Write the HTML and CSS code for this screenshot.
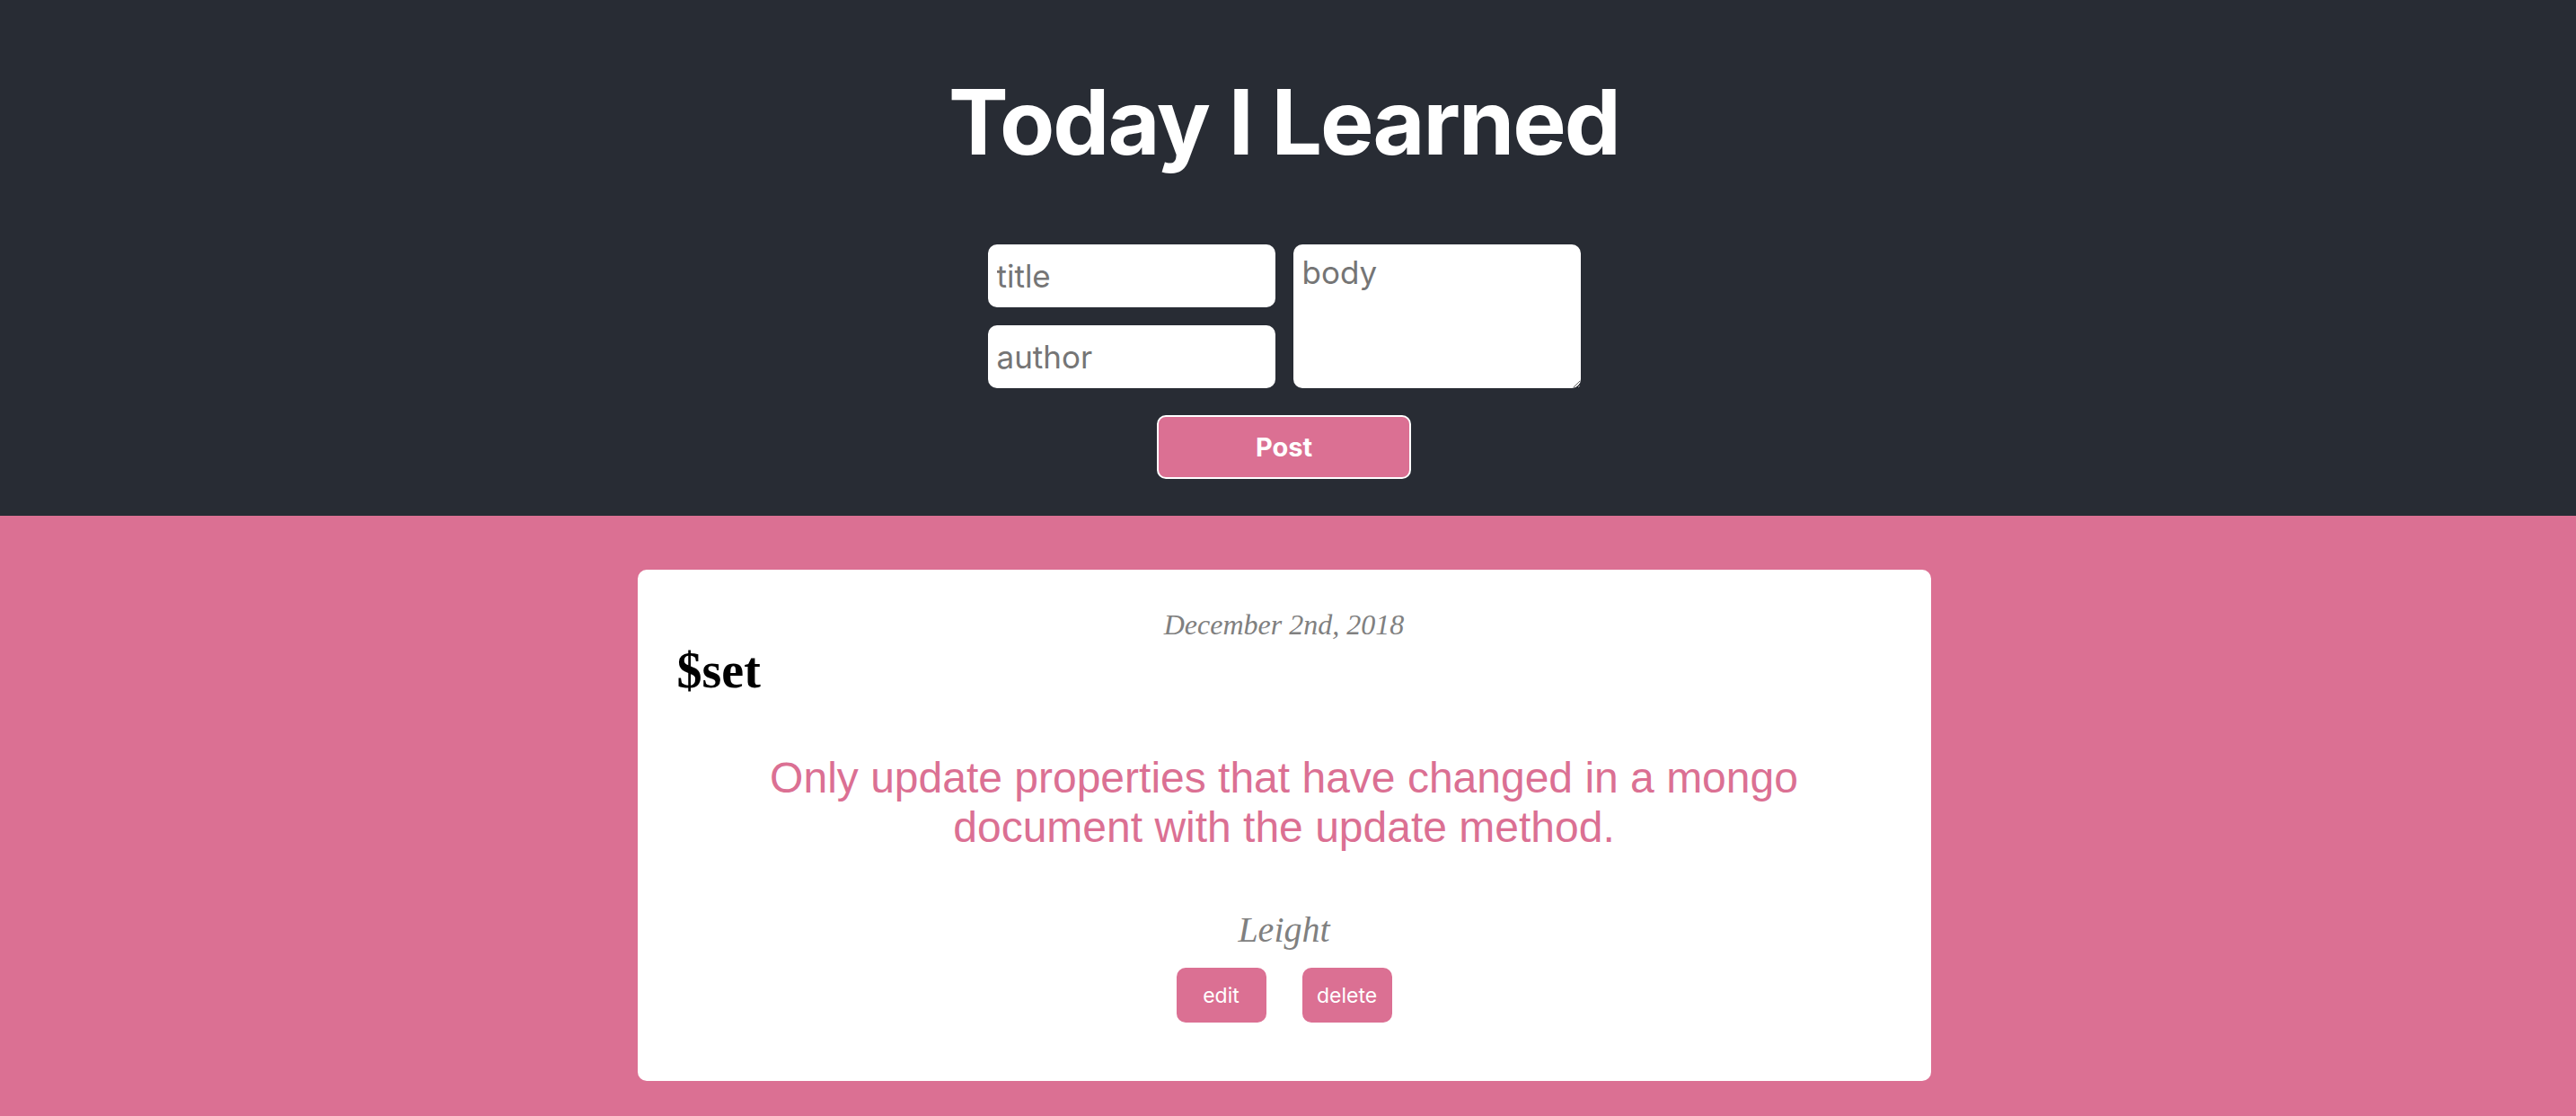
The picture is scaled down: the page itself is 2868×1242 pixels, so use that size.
FILE: index.html
```html
<!DOCTYPE html>
<html lang="en">
<head>
<meta charset="utf-8">
<title>Today I Learned</title>
<link rel="stylesheet" href="styles.css">
</head>
<body>
<header class="app-header">
  <h1 class="app-title">Today I Learned</h1>
  <form class="post-form">
    <div class="fields">
      <input class="field field-title" type="text" placeholder="title">
      <textarea class="field field-body" placeholder="body"></textarea>
      <input class="field field-author" type="text" placeholder="author">
    </div>
    <button class="post-btn" type="button">Post</button>
  </form>
</header>
<main class="posts">
  <article class="card">
    <p class="card-date">December 2nd, 2018</p>
    <h2 class="card-title">$set</h2>
    <p class="card-body">Only update properties that have changed in a mongo document with the update method.</p>
    <p class="card-author">Leight</p>
    <div class="card-actions">
      <button class="action-btn" type="button">edit</button>
      <button class="action-btn" type="button">delete</button>
    </div>
  </article>
</main>
</body>
</html>
```

FILE: styles.css
```css
html, body {
  margin: 0;
  padding: 0;
}

body {
  background: #db7093;
  min-height: 100vh;
}

.app-header {
  background: #282c34;
  padding: 75px 9px 0 0;
  height: 574px;
  box-sizing: border-box;
  display: flex;
  flex-direction: column;
  align-items: center;
}

.app-title {
  margin: 0;
  font-family: Inter, "Liberation Sans", sans-serif;
  font-weight: 700;
  font-size: 100px;
  line-height: 121px;
  letter-spacing: -2px;
  color: #ffffff;
}

.post-form {
  margin-top: 76px;
  display: flex;
  flex-direction: column;
  align-items: center;
}

.fields {
  display: grid;
  grid-template-columns: 320px 320px;
  grid-template-rows: 70px 70px;
  gap: 20px;
}

.field {
  box-sizing: border-box;
  border: none;
  border-radius: 10px;
  background: #ffffff;
  font-family: Inter, "Liberation Sans", sans-serif;
  font-size: 35px;
  color: #333;
  padding: 0 10px;
  outline: none;
  margin: 0;
}

.field::placeholder {
  color: #757575;
}

.field-title {
  grid-column: 1;
  grid-row: 1;
}

.field-author {
  grid-column: 1;
  grid-row: 2;
}

.field-body {
  grid-column: 2;
  grid-row: 1 / span 2;
  padding: 10px 10px;
  resize: both;
  height: 160px;
}

.post-btn {
  margin-top: 30px;
  width: 283px;
  height: 71px;
  box-sizing: border-box;
  background: #db7093;
  border: 2px solid #ffffff;
  border-radius: 10px;
  color: #ffffff;
  font-family: Inter, "Liberation Sans", sans-serif;
  font-weight: 700;
  font-size: 29px;
  padding: 0;
}

.posts {
  padding: 60px 9px 40px 0;
}

.card {
  width: 1440px;
  box-sizing: border-box;
  margin: 0 auto;
  background: #ffffff;
  border-radius: 10px;
  padding: 43px 44px 65px;
}

.card-date {
  margin: 0;
  text-align: center;
  font-family: "Liberation Serif", serif;
  font-style: italic;
  font-size: 32px;
  color: #808080;
}

.card-title {
  margin: 0;
  font-family: "Liberation Serif", serif;
  font-weight: 700;
  font-size: 56px;
  color: #000000;
}

.card-body {
  margin: 60px 0 0;
  text-align: center;
  font-family: "Liberation Sans", Arial, sans-serif;
  font-size: 48px;
  color: #db7093;
}

.card-author {
  margin: 63px 0 0;
  text-align: center;
  font-family: "Liberation Serif", serif;
  font-style: italic;
  font-size: 40px;
  color: #808080;
}

.card-actions {
  margin-top: 19px;
  display: flex;
  justify-content: center;
  gap: 40px;
}

.action-btn {
  width: 100px;
  height: 61px;
  border: none;
  border-radius: 10px;
  background: #db7093;
  color: #ffffff;
  font-family: Inter, "Liberation Sans", sans-serif;
  font-size: 23px;
  padding: 0;
}
```
